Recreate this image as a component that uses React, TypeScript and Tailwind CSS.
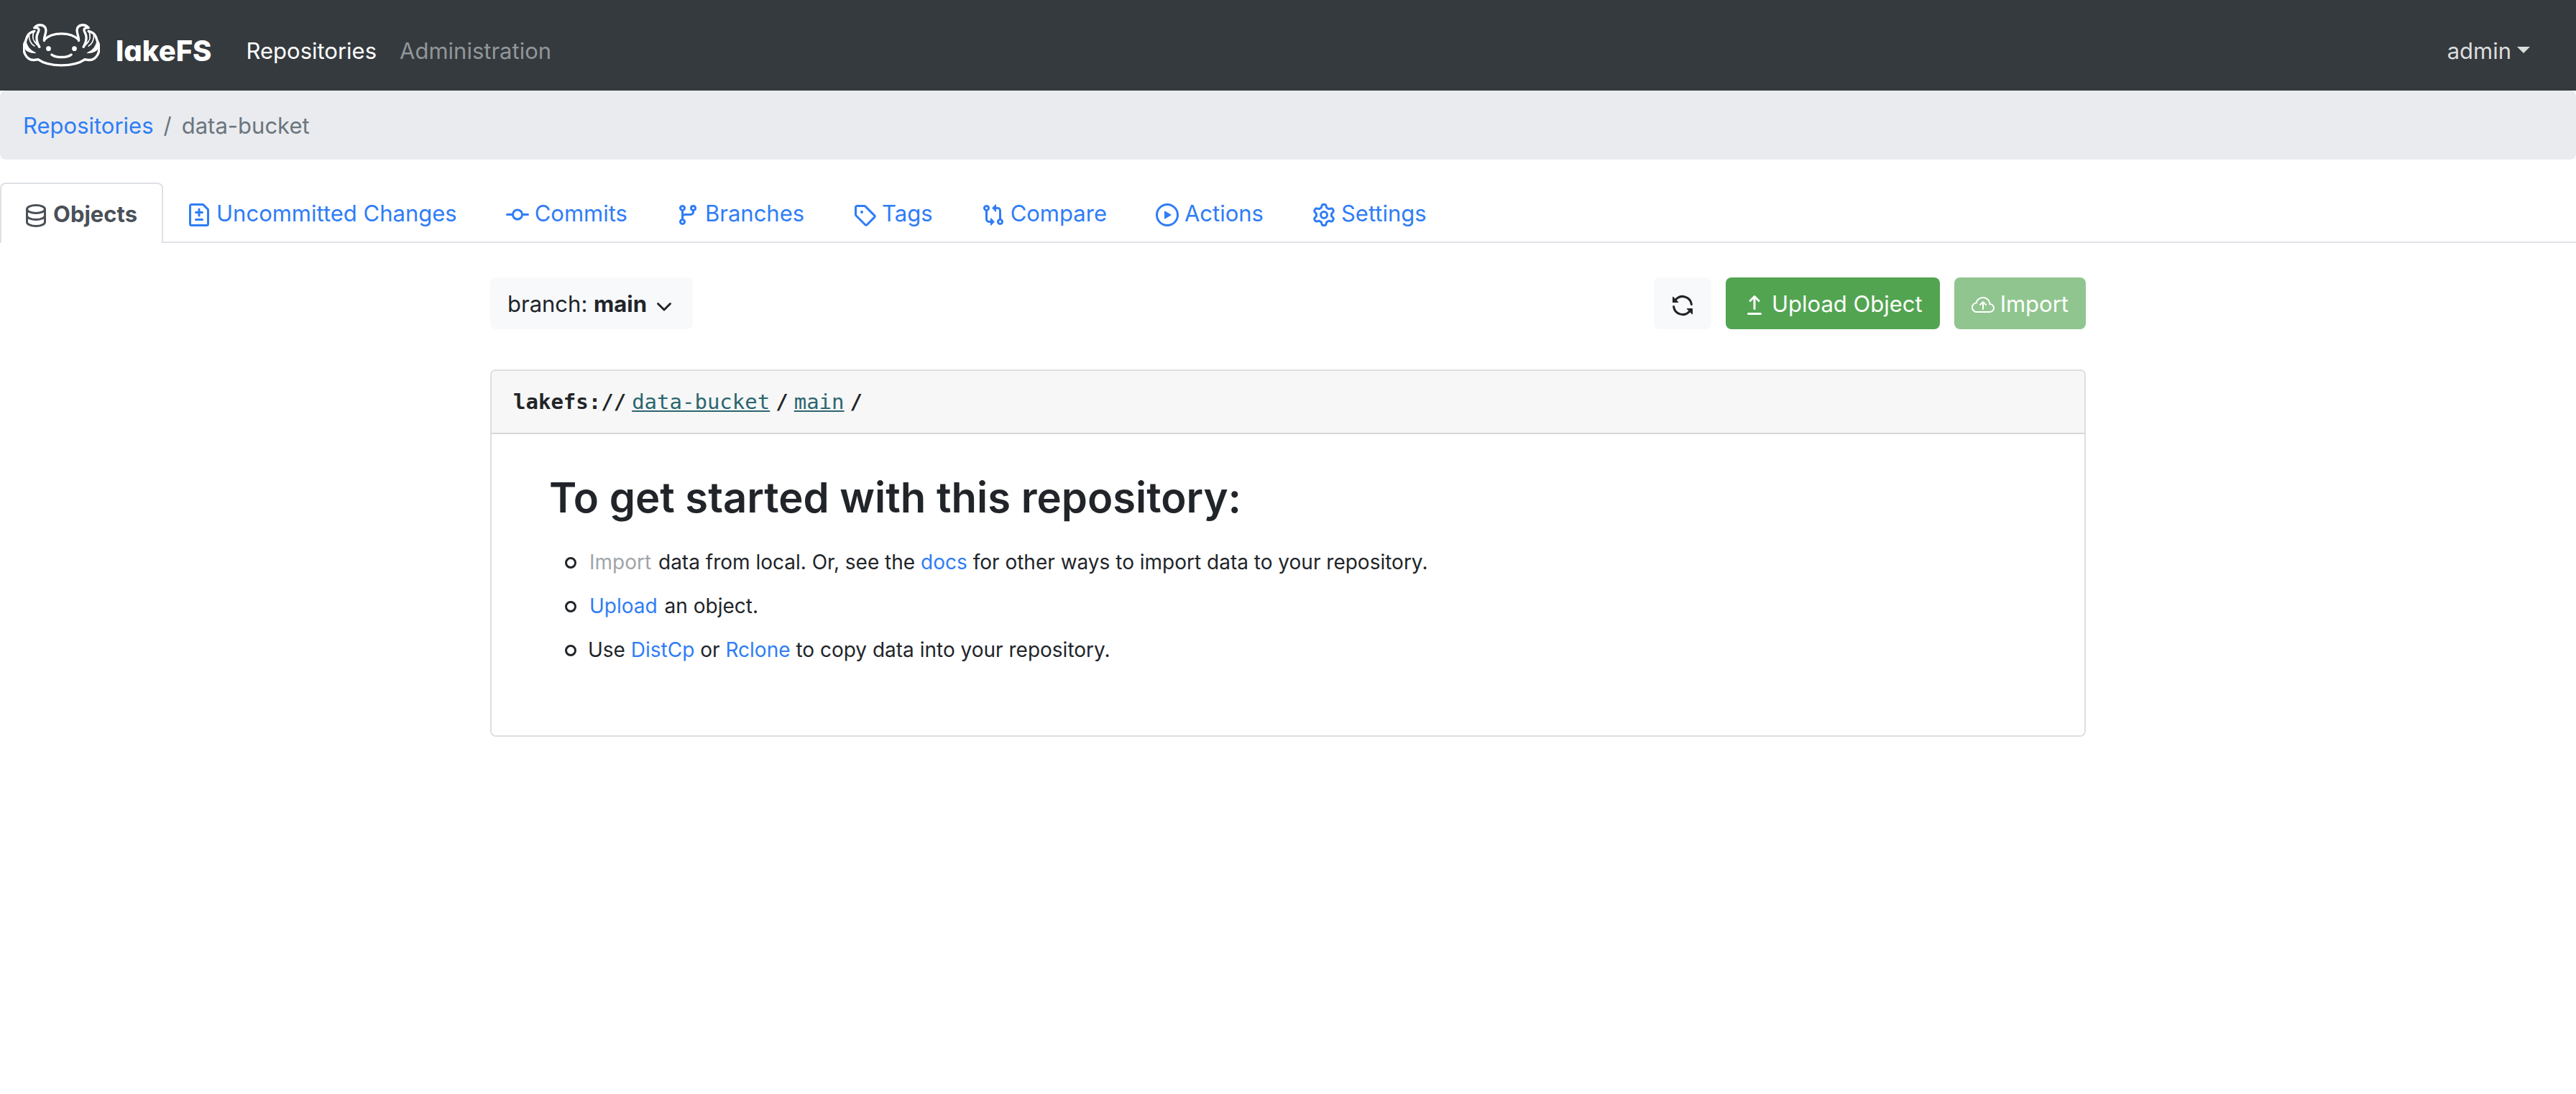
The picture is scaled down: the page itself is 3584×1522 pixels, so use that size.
import React from "react";
import { BsCloudArrowUp } from "react-icons/bs";

function Glyph({ d }: { d: string }) {
  return (
    <svg viewBox="0 0 16 16" className="size-8 shrink-0" fill="currentColor" fillRule="evenodd" aria-hidden="true">
      <path d={d} />
    </svg>
  );
}

const commitPath =
  "M10.5 7.75a2.5 2.5 0 11-5 0 2.5 2.5 0 015 0zm1.43.75a4.002 4.002 0 01-7.86 0H.75a.75.75 0 110-1.5h3.32a4.001 4.001 0 017.86 0h3.32a.75.75 0 110 1.5h-3.32z";
const branchPath =
  "M11.75 2.5a.75.75 0 100 1.5.75.75 0 000-1.5zm-2.25.75a2.25 2.25 0 113 2.122V6A2.5 2.5 0 0110 8.5H6a1 1 0 00-1 1v1.128a2.251 2.251 0 11-1.5 0V5.372a2.25 2.25 0 111.5 0v1.836A2.492 2.492 0 016 7h4a1 1 0 001-1v-.628A2.25 2.25 0 019.5 3.25zM4.25 12a.75.75 0 100 1.5.75.75 0 000-1.5zM3.5 3.25a.75.75 0 111.5 0 .75.75 0 01-1.5 0z";
const tagPath =
  "M2.5 7.775V2.75a.25.25 0 01.25-.25h5.025a.25.25 0 01.177.073l6.25 6.25a.25.25 0 010 .354l-5.025 5.025a.25.25 0 01-.354 0l-6.25-6.25a.25.25 0 01-.073-.177zm-1.5 0V2.75C1 1.784 1.784 1 2.75 1h5.025c.464 0 .91.184 1.238.513l6.25 6.25a1.75 1.75 0 010 2.474l-5.026 5.026a1.75 1.75 0 01-2.474 0l-6.25-6.25A1.75 1.75 0 011 7.775zM6 5a1 1 0 100 2 1 1 0 000-2z";
const comparePath =
  "M9.573.677L7.177 3.073a.25.25 0 000 .354l2.396 2.396A.25.25 0 0010 5.646V4h1a1 1 0 011 1v5.628a2.251 2.251 0 101.5 0V5A2.5 2.5 0 0011 2.5h-1V.854a.25.25 0 00-.427-.177zM6 12v-1.646a.25.25 0 01.427-.177l2.396 2.396a.25.25 0 010 .354l-2.396 2.396A.25.25 0 016 15.146V13.5H5A2.5 2.5 0 012.5 11V5.372a2.25 2.25 0 111.5 0V11a1 1 0 001 1h1zm6.75 0a.75.75 0 100 1.5.75.75 0 000-1.5zM4 3.25a.75.75 0 11-1.5 0 .75.75 0 011.5 0z";
const playPath =
  "M1.5 8a6.5 6.5 0 1113 0 6.5 6.5 0 01-13 0zM8 0a8 8 0 100 16A8 8 0 008 0zM6.379 5.227A.25.25 0 006 5.442v5.117a.25.25 0 00.379.214l4.264-2.559a.25.25 0 000-.428L6.379 5.227z";
const gearPath =
  "M7.429 1.525a6.593 6.593 0 011.142 0c.036.003.108.036.137.146l.289 1.105c.147.56.55.967.997 1.189.174.086.341.183.501.29.417.278.97.423 1.53.27l1.102-.303c.11-.03.175.016.195.046.219.31.41.641.573.989.014.031.022.11-.059.19l-.815.806c-.411.406-.562.957-.53 1.456a4.588 4.588 0 010 .582c-.032.499.119 1.05.53 1.456l.815.806c.08.08.073.159.059.19a6.494 6.494 0 01-.573.99c-.02.029-.086.074-.195.045l-1.103-.303c-.559-.153-1.112-.008-1.529.27-.16.107-.327.204-.5.29-.449.222-.851.628-.998 1.189l-.289 1.105c-.029.11-.101.143-.137.146a6.613 6.613 0 01-1.142 0c-.036-.003-.108-.037-.137-.146l-.289-1.105c-.147-.56-.55-.967-.997-1.189a4.502 4.502 0 01-.501-.29c-.417-.278-.97-.423-1.53-.27l-1.102.303c-.11.03-.175-.016-.195-.046a6.492 6.492 0 01-.573-.989c-.014-.031-.022-.11.059-.19l.815-.806c.411-.406.562-.957.53-1.456a4.587 4.587 0 010-.582c.032-.499-.119-1.05-.53-1.456l-.815-.806c-.08-.08-.073-.159-.059-.19a6.44 6.44 0 01.573-.99c.02-.029.086-.075.195-.045l1.103.303c.559.153 1.112.008 1.529-.27.16-.107.327-.204.5-.29.449-.222.851-.628.998-1.189l.289-1.105c.029-.11.101-.143.137-.146zM8 0c-.236 0-.47.01-.701.03-.743.065-1.29.615-1.458 1.261l-.29 1.106c-.017.066-.078.158-.211.224a5.994 5.994 0 00-.668.386c-.123.082-.233.09-.3.071L3.27 2.776c-.644-.177-1.392.02-1.82.63a7.977 7.977 0 00-.704 1.217c-.315.675-.111 1.422.363 1.891l.815.806c.05.048.098.147.088.294a6.084 6.084 0 000 .772c.01.147-.038.246-.088.294l-.815.806c-.474.469-.678 1.216-.363 1.891.2.428.436.835.704 1.218.428.609 1.176.806 1.82.63l1.103-.303c.066-.019.176-.011.299.071.213.143.436.272.668.386.133.066.194.158.212.224l.289 1.106c.169.646.715 1.196 1.458 1.26a8.094 8.094 0 001.402 0c.743-.064 1.29-.614 1.458-1.26l.29-1.106c.017-.066.078-.158.211-.224a5.98 5.98 0 00.668-.386c.123-.082.233-.09.3-.071l1.102.302c.644.177 1.392-.02 1.82-.63.268-.382.505-.789.704-1.217.315-.675.111-1.422-.364-1.891l-.814-.806c-.05-.048-.098-.147-.088-.294a6.1 6.1 0 000-.772c-.01-.147.039-.246.088-.294l.814-.806c.475-.469.679-1.216.364-1.891a7.992 7.992 0 00-.704-1.218c-.428-.609-1.176-.806-1.82-.63l-1.103.303c-.066.019-.176.011-.299-.071a5.991 5.991 0 00-.668-.386c-.133-.066-.194-.158-.212-.224L10.16 1.29C9.99.645 9.444.095 8.701.031A8.094 8.094 0 008 0zm1.5 8a1.5 1.5 0 11-3 0 1.5 1.5 0 013 0zM11 8a3 3 0 11-6 0 3 3 0 016 0z";
const syncPath =
  "M8 2.5a5.487 5.487 0 00-4.131 1.869l1.204 1.204A.25.25 0 014.896 6H1.25A.25.25 0 011 5.75V2.104a.25.25 0 01.427-.177l1.38 1.38A7.001 7.001 0 0114.95 7.16a.75.75 0 11-1.49.178A5.501 5.501 0 008 2.5zM1.705 8.005a.75.75 0 01.834.656 5.501 5.501 0 009.592 2.97l-1.204-1.204a.25.25 0 01.177-.427h3.646a.25.25 0 01.25.25v3.646a.25.25 0 01-.427.177l-1.38-1.38A7.001 7.001 0 011.05 8.84a.75.75 0 01.656-.834z";
const uploadPath =
  "M8.53 1.22a.75.75 0 00-1.06 0L4.47 4.22a.75.75 0 001.06 1.06l1.72-1.72v6.69a.75.75 0 001.5 0V3.56l1.72 1.72a.75.75 0 101.06-1.06L8.53 1.22zM3.75 13a.75.75 0 000 1.5h8.5a.75.75 0 000-1.5h-8.5z";
const chevronPath =
  "M12.78 6.22a.75.75 0 010 1.06l-4.25 4.25a.75.75 0 01-1.06 0L3.22 7.28a.75.75 0 011.06-1.06L8 9.94l3.72-3.72a.75.75 0 011.06 0z";

function DatabaseIcon() {
  return (
    <svg viewBox="0 0 16 16" className="size-8 shrink-0" fill="none" stroke="currentColor" strokeWidth="1.5" aria-hidden="true">
      <ellipse cx="8" cy="3.5" rx="6.25" ry="2.75" />
      <path d="M1.750 3.500v9c0 1.500 2.800 2.750 6.250 2.750s6.250-1.250 6.250-2.750v-9M1.750 8c0 1.500 2.800 2.750 6.250 2.750S14.250 9.500 14.250 8" />
    </svg>
  );
}

function DiffIcon() {
  return (
    <svg viewBox="0 0 16 16" className="size-8 shrink-0" fill="none" stroke="currentColor" strokeWidth="1.5" strokeLinecap="round" strokeLinejoin="round" aria-hidden="true">
      <path d="M2.750.750h7.600a1 1 0 01.7.3l2.900 2.900a1 1 0 01.3.7v9.600a1 1 0 01-1 1H2.750a1 1 0 01-1-1V1.750a1 1 0 011-1z" />
      <path d="M8 4v4.500M5.750 6.250h4.500M5.750 11.250h4.500" />
    </svg>
  );
}

function AxolotlSide() {
  return (
    <>
      <path d="M125 116 C123 100 134 86 132 70 C130 50 102 42 84 62 C104 60 106 70 98 84 C88 104 96 126 105 142" />
      <path d="M105 142 C82 128 72 108 84 76 C76 80 76 96 78 108 Z" fill="#fff" strokeWidth="3" />
      <path d="M84 76 C56 82 52 102 48 116 C38 134 36 156 46 174 C56 194 76 200 99 194" />
      <path d="M48 114 C50 138 64 156 88 167 C62 166 44 156 42 140 Z" fill="#fff" strokeWidth="4" />
      <path d="M62 92 C60 112 70 130 84 138" strokeWidth="5" />
      <circle cx="143" cy="149" r="10" fill="#fff" stroke="none" />
    </>
  );
}

function AxolotlLogo() {
  return (
    <svg viewBox="37 45 320 180" className="h-[60px] w-[107px] shrink-0" fill="none" stroke="#fff" strokeWidth="10" strokeLinecap="round" strokeLinejoin="round" aria-hidden="true">
      <path d="M125 112 C158 78 236 78 269 112" />
      <path d="M99 194 C146 227 248 227 295 194" />
      <path d="M156 174 C172 188 222 188 238 174" />
      <AxolotlSide />
      <g transform="translate(394 0) scale(-1 1)">
        <AxolotlSide />
      </g>
    </svg>
  );
}

const tabs = [
  { label: "Objects", icon: <DatabaseIcon />, active: true },
  { label: "Uncommitted Changes", icon: <DiffIcon /> },
  { label: "Commits", icon: <Glyph d={commitPath} /> },
  { label: "Branches", icon: <Glyph d={branchPath} /> },
  { label: "Tags", icon: <Glyph d={tagPath} /> },
  { label: "Compare", icon: <Glyph d={comparePath} /> },
  { label: "Actions", icon: <Glyph d={playPath} /> },
  { label: "Settings", icon: <Glyph d={gearPath} /> },
];

function Step({ children }: { children: React.ReactNode }) {
  return (
    <li className="flex items-center py-2 leading-[45px]">
      <span className="mr-4 ml-[22px] size-4 rounded-full border-[3px] border-current" />
      <div>{children}</div>
    </li>
  );
}

export default function App() {
  return (
    <div className="min-h-screen bg-white font-[Inter,sans-serif] text-[31px] leading-[48px] text-[#212529]">
      <nav className="flex h-[126px] items-center bg-[#353a3e] px-8">
        <a
          href="#"
          className="flex items-center gap-[22px] text-[40px] font-extrabold text-white [font-feature-settings:'cv11']"
          aria-label="lakeFS"
        >
          <AxolotlLogo />
          <span className="pt-4">lakeFS</span>
        </a>
        <a href="#" className="ml-12 pt-4 text-white">Repositories</a>
        <a href="#" className="ml-8 pt-4 text-[#929699]">Administration</a>
        <button className="ml-auto flex items-center gap-2 pt-4 pr-8 text-[#dcdddd]">
          admin
          <span className="mb-1 border-x-[9px] border-t-[9px] border-x-transparent border-t-current" />
        </button>
      </nav>

      <nav aria-label="breadcrumb" className="flex h-24 items-center gap-[14px] rounded-lg bg-[#e9ebef] px-8 pt-0.5 text-[#6c757d]">
        <a href="#" className="text-[#2f7df6]">Repositories</a>
        <span>/</span>
        <span>data-bucket</span>
      </nav>

      <div className="mt-8 flex h-[84px] border-b-2 border-[#dee2e6]">
        {tabs.map(({ label, icon, active }) => (
          <a
            key={label}
            href="#"
            className={
              active
                ? "-mb-[2px] flex items-center gap-2 rounded-t-lg border-2 border-b-0 border-[#dee2e6] bg-white pr-[34px] pl-8 pt-0.5 font-bold text-[#495057]"
                : "flex items-center gap-2 border-x-2 border-transparent px-8 pt-1 text-[#2f7df6]"
            }
          >
            <span className="pt-1">{icon}</span>
            {label}
          </a>
        ))}
      </div>

      <main className="mx-auto mt-12 max-w-[2220px]">
        <div className="flex items-center gap-5">
          <button className="flex h-[72px] items-center gap-2 rounded-lg bg-[#f8f9fb] px-6 pt-0.5">
            <span>branch: <b>main</b></span>
            <span className="pt-1"><Glyph d={chevronPath} /></span>
          </button>
          <button aria-label="Refresh" className="ml-auto flex h-[72px] w-20 items-center justify-center rounded-lg bg-[#f8f9fb] pt-1.5">
            <Glyph d={syncPath} />
          </button>
          <button className="flex h-[72px] items-center gap-2 rounded-lg bg-[#52a451] px-6 pt-0.5 text-white">
            <span className="pt-1"><Glyph d={uploadPath} /></span>
            Upload Object
          </button>
          <button disabled className="flex h-[72px] items-center gap-2 rounded-lg bg-[#90c58f] px-6 pt-0.5 text-white">
            <span className="pt-1"><BsCloudArrowUp className="size-8" /></span>
            Import
          </button>
        </div>

        <section className="mt-14 overflow-hidden rounded-lg border-2 border-[#dfdfdf]">
          <div className="flex h-[88px] items-center gap-2 border-b-2 border-[#d8d8d8] bg-[#f7f7f7] px-[30px] font-['DejaVu_Sans_Mono',monospace] text-[29px]">
            <b>lakefs://</b>
            <a href="#" className="text-[#2c6670] underline">data-bucket</a>
            <b>/</b>
            <a href="#" className="text-[#2c6670] underline">main</a>
            <b>/</b>
          </div>
          <div className="px-20 pt-12 pb-[88px]">
            <h2 className="text-[58px] leading-[80px] font-semibold">To get started with this repository:</h2>
            <ul className="mt-5 text-[28px]">
              <Step>
                <button disabled className="mr-0.5 ml-0.5 text-[#a1a5a9]">Import</button> data from local. Or, see the{" "}
                <a href="#" className="text-[#2f7df6]">docs</a> for other ways to import data to your repository.
              </Step>
              <Step>
                <button className="mr-0.5 ml-0.5 text-[#2f7df6]">Upload</button> an object.
              </Step>
              <Step>
                Use <a href="#" className="text-[#2f7df6]">DistCp</a> or{" "}
                <a href="#" className="text-[#2f7df6]">Rclone</a> to copy data into your repository.
              </Step>
            </ul>
          </div>
        </section>
      </main>
    </div>
  );
}
